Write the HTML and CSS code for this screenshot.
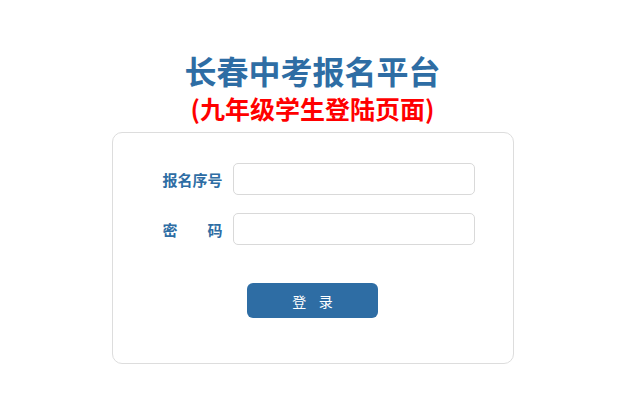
FILE: index.html
```html
<!DOCTYPE html>
<html>
  <head>
    <meta charset="UTF-8" />
    <meta name="viewport" content="width=device-width, initial-scale=1.0" />
    <title>长春中考报名平台</title>
    <link rel="stylesheet" href="styles.css">
  </head>
  <body>
    <div class="login-page">
      <div class="login-header">
        <h1 class="login-title">长春中考报名平台</h1>
        <div class="login-subtitle">(九年级学生登陆页面)</div>
      </div>
      <div class="login-card">
        <form class="login-form" onsubmit="return false">
          <div class="login-row">
            <label for="bmxh">报名序号</label>
            <input type="text" id="bmxh" />
          </div>
          <div class="login-row">
            <label for="pwd" class="label-spread"><span>密</span><span>码</span></label>
            <input type="password" id="pwd" />
          </div>
          <div class="login-actions">
            <button type="submit" class="login-button">登&nbsp;&nbsp;&nbsp;&nbsp;录</button>
          </div>
        </form>
      </div>
    </div>
  </body>
</html>
```

FILE: styles.css
```css
* {
  box-sizing: border-box;
  margin: 0;
  padding: 0;
}

body {
  font-family: 'Noto Sans CJK SC', 'Liberation Sans', sans-serif;
  background: #fff;
}

.login-page {
  display: flex;
  flex-direction: column;
  align-items: center;
  padding: 50px 9px 0 0;
}

.login-header {
  text-align: center;
}

.login-title {
  font-size: 32px;
  line-height: 40px;
  font-weight: bold;
  color: #2e6da4;
}

.login-subtitle {
  font-size: 25px;
  line-height: 34px;
  margin-top: 1px;
  font-weight: bold;
  color: #ff0000;
}

.login-card {
  width: 402px;
  height: 232px;
  margin-top: 7px;
  border: 1px solid #ddd;
  border-radius: 10px;
  padding: 30px 37px 0 50px;
}

.login-row {
  display: flex;
  align-items: center;
  margin-bottom: 18px;
}

.login-row label {
  width: 60px;
  margin-right: 10px;
  font-size: 15px;
  font-weight: bold;
  color: #2e6da4;
}

.label-spread {
  display: flex;
  justify-content: space-between;
}

.login-row input {
  width: 242px;
  height: 32px;
  border: 1px solid #d9d9d9;
  border-radius: 5px;
  padding: 0 8px;
  font-size: 14px;
  outline: none;
}

.login-actions {
  display: flex;
  justify-content: center;
  padding: 20px 0 0 0;
  margin-left: -50px;
  margin-right: -37px;
}

.login-button {
  width: 131px;
  height: 35px;
  background-color: #2e6da4;
  color: #fff;
  border: none;
  border-radius: 6px;
  font-size: 14px;
  font-family: 'Noto Sans CJK SC', 'Liberation Sans', sans-serif;
  cursor: pointer;
}
```
